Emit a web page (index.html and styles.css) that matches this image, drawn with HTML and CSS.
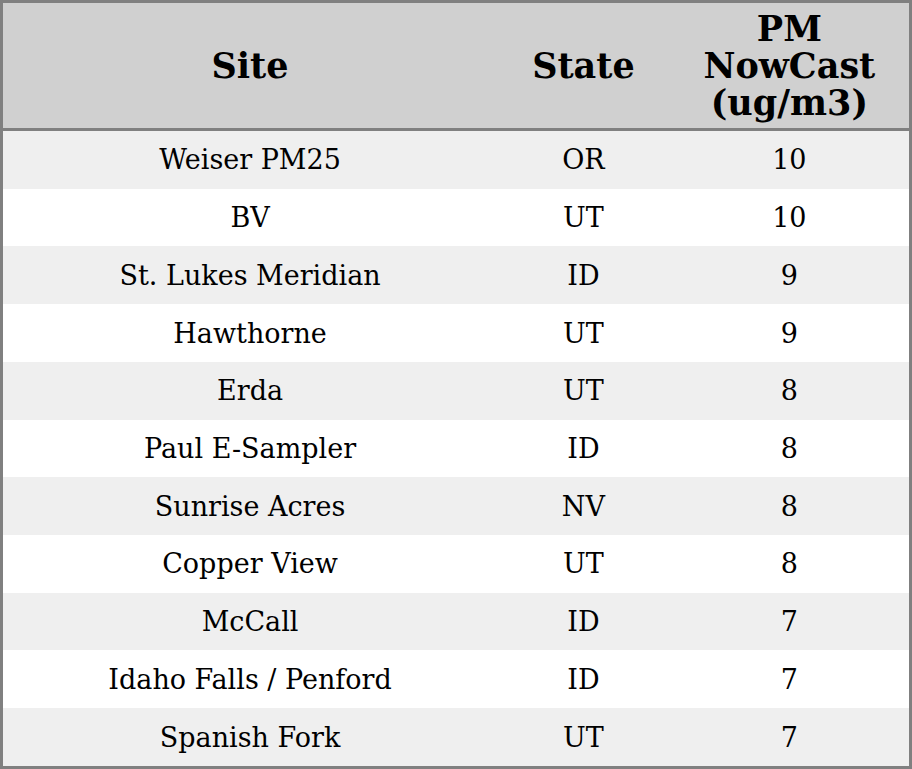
FILE: index.html
```html
<!DOCTYPE html>
<html>
<head>
<meta charset="utf-8">
<link rel="stylesheet" href="styles.css">
</head>
<body>
<table class="aq-table">
  <colgroup>
    <col class="c-site">
    <col class="c-state">
    <col class="c-pm">
  </colgroup>
  <thead>
    <tr>
      <th>Site</th>
      <th>State</th>
      <th>PM<br>NowCast<br>(ug/m3)</th>
    </tr>
  </thead>
  <tbody>
    <tr><td>Weiser PM25</td><td>OR</td><td>10</td></tr>
    <tr><td>BV</td><td>UT</td><td>10</td></tr>
    <tr><td>St. Lukes Meridian</td><td>ID</td><td>9</td></tr>
    <tr><td>Hawthorne</td><td>UT</td><td>9</td></tr>
    <tr><td>Erda</td><td>UT</td><td>8</td></tr>
    <tr><td>Paul E-Sampler</td><td>ID</td><td>8</td></tr>
    <tr><td>Sunrise Acres</td><td>NV</td><td>8</td></tr>
    <tr><td>Copper View</td><td>UT</td><td>8</td></tr>
    <tr><td>McCall</td><td>ID</td><td>7</td></tr>
    <tr><td>Idaho Falls / Penford</td><td>ID</td><td>7</td></tr>
    <tr><td>Spanish Fork</td><td>UT</td><td>7</td></tr>
  </tbody>
</table>
</body>
</html>
```
FILE: styles.css
```css
html, body {
  margin: 0;
  padding: 0;
  background: #ffffff;
}
.aq-table {
  width: 912px;
  height: 769px;
  border-collapse: collapse;
  border: 3px solid #808080;
  table-layout: fixed;
  font-family: "DejaVu Serif", serif;
  color: #000;
}
.c-site { width: 494px; }
.c-state { width: 172px; }
.c-pm { width: 240px; }
.aq-table thead tr {
  background: #d0d0d0;
  border-bottom: 3px solid #808080;
}
.aq-table th {
  font-size: 35px;
  font-weight: bold;
  line-height: 37px;
  padding: 0;
  height: 125px;
  text-align: center;
  vertical-align: middle;
}
.aq-table td {
  font-size: 27px;
  padding: 0;
  text-align: center;
  vertical-align: middle;
  height: 57px;
}
.aq-table tbody tr:nth-child(odd) {
  background: #efefef;
}
.aq-table tbody tr:nth-child(even) {
  background: #ffffff;
}
```
